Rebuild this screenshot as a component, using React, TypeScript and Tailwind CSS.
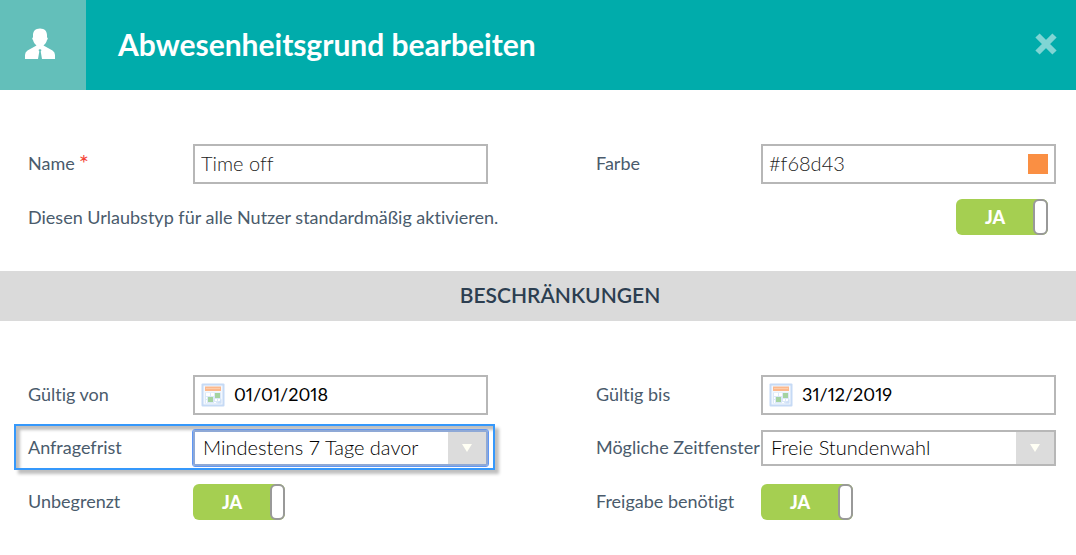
import React, { useState } from "react";
import { clsx } from "clsx";

type FieldProps = {
  id: string;
  label: string;
  required?: boolean;
  highlighted?: boolean;
  children: React.ReactNode;
};

const Field: React.FC<FieldProps> = ({
  id,
  label,
  required,
  highlighted,
  children,
}) => (
  <div className="relative flex items-center">
    {highlighted && (
      <div className="pointer-events-none absolute -top-[6px] -bottom-[4px] -left-[14px] -right-[7px] border-2 border-[#3598fb] shadow-[4px_4px_3px_rgba(0,0,0,0.25),inset_4px_4px_3px_rgba(0,0,0,0.25)]" />
    )}
    <label
      htmlFor={id}
      className="flex w-[165px] shrink-0 pb-[2px] text-[18px] leading-6 whitespace-nowrap text-[#4a5b6c]"
    >
      {label}
      {required && (
        <span className="ml-1 text-[24px] leading-6 text-[#f44336]">*</span>
      )}
    </label>
    {children}
  </div>
);

const CalendarIcon: React.FC = () => (
  <svg viewBox="0 0 24 24" className="absolute left-2 size-6" aria-hidden="true">
    <rect x="0.5" y="0.5" width="23" height="23" rx="1" fill="#c6daf5" />
    <rect x="2.5" y="2.5" width="19" height="19" fill="#f3f8fe" />
    <rect x="4" y="3.500" width="16" height="4.500" fill="#fcb88c" />
    <rect x="5" y="5" width="14" height="1" fill="#fdcdaa" />
    <path d="M4 9.500h16v11H4z" fill="#dbe8f8" />
    <path
      d="M5 10h4v3H5zM10 10h3v3h-3zM5 14h1v2H5zM14 16h2v2h-2zM17 16h2v2h-2zM5 17h1v3H5zM13 19h2v1h-2z"
      fill="#fff"
    />
    <rect x="14" y="10" width="5" height="5" fill="#a5d3a0" />
    <rect x="7" y="14" width="5" height="5" fill="#a5d3a0" />
    <path d="M16 20.500l4.500-4.500v4.500z" fill="#cfe0f7" />
  </svg>
);

type InputProps = { id: string; initial: string };

const TextInput: React.FC<InputProps> = ({ id, initial }) => {
  const [value, setValue] = useState(initial);
  return (
    <input
      id={id}
      type="text"
      value={value}
      onChange={(e) => setValue(e.target.value)}
      className="h-10 w-full min-w-0 border-2 border-[#b7b7b7] bg-white px-[6px] pb-[2px] text-[20px] font-light text-[#222]"
    />
  );
};

const DateInput: React.FC<InputProps> = ({ id, initial }) => {
  const [value, setValue] = useState(initial);
  return (
    <div className="relative flex flex-1 items-center">
      <CalendarIcon />
      <input
        id={id}
        type="text"
        value={value}
        onChange={(e) => setValue(e.target.value)}
        className="h-10 w-full min-w-0 border-2 border-[#b7b7b7] pr-2 pb-[2px] pl-[39px] text-[18px] text-black proportional-nums"
      />
    </div>
  );
};

type SelectProps = { id: string; options: string[]; active?: boolean };

const Select: React.FC<SelectProps> = ({ id, options, active }) => (
  <div className="relative flex flex-1">
    <select
      id={id}
      className={clsx(
        "h-9 w-full appearance-none border-2 bg-white pr-11 pb-[2px] pl-2 text-[20px] leading-6 font-light text-black",
        active
          ? "rounded-xs border-[#8fa9d6] outline-1 outline-[#5f97f5]"
          : "border-[#b7b7b7]",
      )}
    >
      {options.map((option) => (
        <option key={option}>{option}</option>
      ))}
    </select>
    <span className="pointer-events-none absolute inset-y-[2px] right-[2px] flex w-[38px] items-center justify-center bg-[#dcdcdc]">
      <svg viewBox="0 0 10 8" className="h-2 w-[10px]" aria-hidden="true">
        <path d="M0 0h10L5 8z" fill="#fffff4" />
      </svg>
    </span>
  </div>
);

const Toggle: React.FC<{ id: string }> = ({ id }) => {
  const [on, setOn] = useState(true);
  return (
    <label
      className={clsx(
        "relative flex h-9 w-[92px] shrink-0 cursor-pointer items-center justify-center rounded-md pr-[14px] text-[18px] font-black text-white",
        on ? "bg-[#a5cf51]" : "bg-[#b7b7b7]",
      )}
    >
      <input
        id={id}
        type="checkbox"
        checked={on}
        onChange={() => setOn(!on)}
        className="sr-only"
      />
      {on ? "JA" : "NEIN"}
      <span
        className={clsx(
          "absolute inset-y-0 w-[15px] rounded-md border-2 border-[#999] bg-white",
          on ? "right-0" : "left-0",
        )}
      />
    </label>
  );
};

const App: React.FC = () => {
  return (
    <div className="min-h-screen bg-white font-['Lato',sans-serif] [font-variant-ligatures:none]">
      <header className="flex h-[90px] items-stretch bg-[#00acab]">
        <div className="flex w-[86px] shrink-0 items-center justify-center bg-[#63bfba] pr-[6px] pb-[2px]">
          <svg
            viewBox="0 0 32 32"
            className="size-8"
            fill="#fff"
            aria-hidden="true"
          >
            <path d="M16 .5c-4.600 0-7 2.800-7 6.500v2.500c-1 0-1 1.600 0 2.500.8 3 2.200 4.200 3.500 5.500L3.500 22.500Q1 24 1 27v4h13l1.300-7.500-.8-1.500 1.500-1 1.500 1-.8 1.500L18 31h13v-4q0-3-2.500-4.500L19.500 17.500c1.300-1.300 2.700-2.500 3.500-5.500 1-.9 1-2.500 0-2.500V7c0-3.700-2.400-6.500-7-6.500z" />
          </svg>
        </div>
        <h1 className="flex-1 self-center pb-[2px] pl-8 text-[30px] leading-9 font-bold text-white">
          Abwesenheitsgrund bearbeiten
        </h1>
        <button
          type="button"
          aria-label="Schließen"
          className="mr-[19px] cursor-pointer pb-[2px]"
        >
          <svg
            viewBox="0 0 22 22"
            className="size-[22px]"
            stroke="#80d5d4"
            strokeWidth="6"
            aria-hidden="true"
          >
            <path d="M2.500 2.500l17 17M19.500 2.500l-17 17" />
          </svg>
        </button>
      </header>

      <form>
        <section className="pt-[54px] pr-5 pb-9 pl-7">
          <div className="grid grid-cols-2 gap-x-[108px]">
            <Field id="name" label="Name" required>
              <TextInput id="name" initial="Time off" />
            </Field>
            <Field id="color" label="Farbe">
              <div className="relative flex flex-1 items-center">
                <TextInput id="color" initial="#f68d43" />
                <span className="absolute right-2 size-5 bg-[#fa8f43]" />
              </div>
            </Field>
          </div>
          <div className="mt-[15px] flex items-center justify-between pr-2">
            <label
              htmlFor="default"
              className="text-[18px] leading-6 text-[#4a5b6c]"
            >
              Diesen Urlaubstyp für alle Nutzer standardmäßig aktivieren.
            </label>
            <Toggle id="default" />
          </div>
        </section>

        <h2 className="bg-[#dadada] pb-[2px] pl-11 text-center text-[21px] leading-[48px] font-semibold text-[#2c3e50] uppercase">
          Beschränkungen
        </h2>

        <section className="grid grid-cols-2 gap-x-[108px] pt-[54px] pr-5 pb-9 pl-7">
          <div className="flex flex-col">
            <Field id="from" label="Gültig von">
              <DateInput id="from" initial="01/01/2018" />
            </Field>
            <div className="mt-[15px] mb-[18px]">
              <Field id="deadline" label="Anfragefrist" highlighted>
                <Select
                  id="deadline"
                  options={["Mindestens 7 Tage davor", "Mindestens 14 Tage davor"]}
                  active
                />
              </Field>
            </div>
            <Field id="unlimited" label="Unbegrenzt">
              <Toggle id="unlimited" />
            </Field>
          </div>
          <div className="flex flex-col">
            <Field id="until" label="Gültig bis">
              <DateInput id="until" initial="31/12/2019" />
            </Field>
            <div className="mt-[15px] mb-[18px]">
              <Field id="window" label="Mögliche Zeitfenster">
                <Select id="window" options={["Freie Stundenwahl", "Ganztägig"]} />
              </Field>
            </div>
            <Field id="approval" label="Freigabe benötigt">
              <Toggle id="approval" />
            </Field>
          </div>
        </section>
      </form>
    </div>
  );
};

export default App;
